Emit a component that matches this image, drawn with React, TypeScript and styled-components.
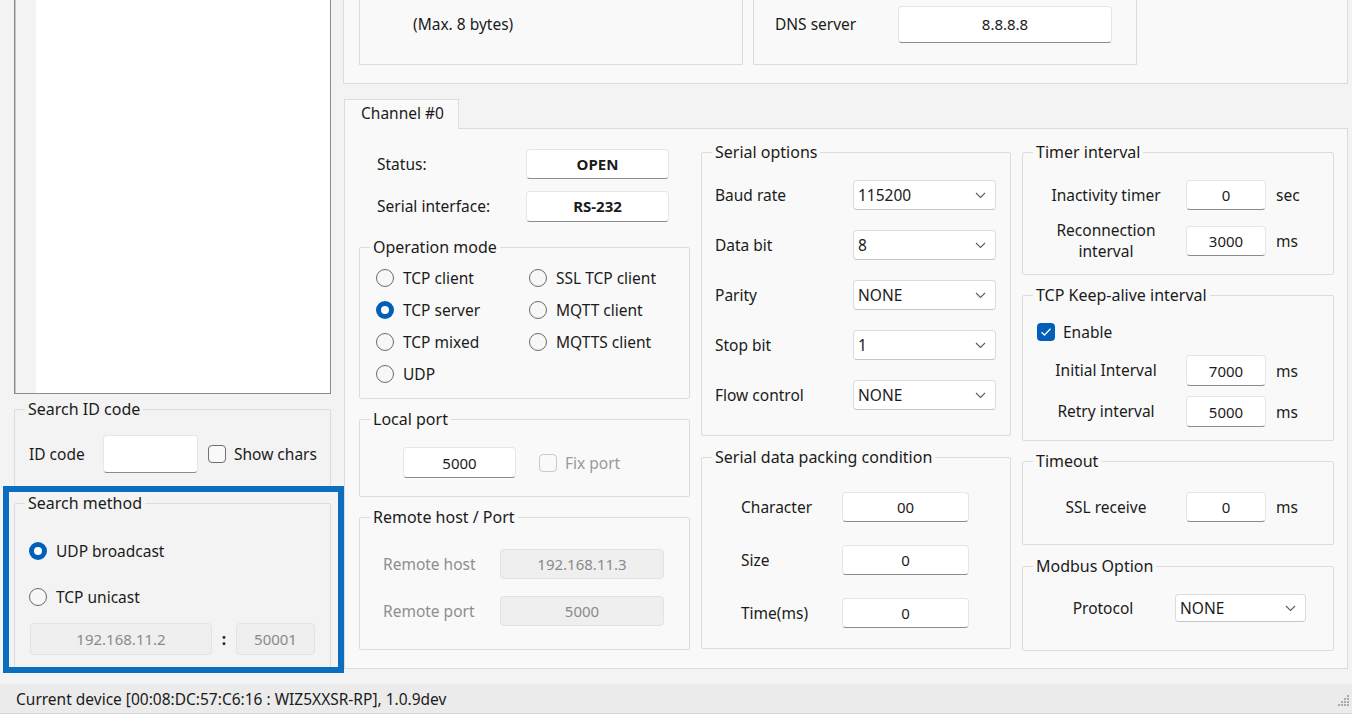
import React from "react";
import styled, { createGlobalStyle, css } from "styled-components";

const GlobalStyle = createGlobalStyle`
  html, body { margin: 0; padding: 0; }
  body {
    width: 1352px;
    height: 714px;
    overflow: hidden;
    background: #f3f3f3;
    font-family: "Noto Sans", "Open Sans", sans-serif;
    font-size: 15.5px;
    color: #1b1b1b;
  }
  * { box-sizing: border-box; }
`;

const Window = styled.div`
  width: 1352px;
  height: 714px;
  display: flex;
  flex-direction: column;
`;

const Main = styled.div`
  display: flex;
  height: 684px;
`;

/* ---------- left panel ---------- */
const LeftPanel = styled.div`
  position: relative;
  width: 343px;
  flex: none;
  padding: 0 12px 0 14px;
  display: flex;
  flex-direction: column;
`;

const ListBox = styled.div`
  height: 394px;
  border: 1px solid #8a8a8a;
  border-top: none;
  display: flex;
  box-shadow: inset 1px 0 0 #c4c4c4;
`;

const ListGutter = styled.div`
  width: 20px;
  background: #f3f3f3;
  margin-left: 1px;
`;

const ListBody = styled.div`
  flex: 1;
  background: #fff;
`;

const Highlight = styled.div`
  position: absolute;
  left: 3px;
  top: 486px;
  width: 341px;
  height: 187px;
  border: 6px solid #0b6dbe;
  pointer-events: none;
`;

/* ---------- generic controls ---------- */
const GroupBox = styled.fieldset<{ $h: number; $mt?: number }>`
  margin: ${(p) => p.$mt ?? 0}px 0 0 0;
  padding: 0;
  min-width: 0;
  border: 1px solid #dcdcdc;
  border-radius: 2px;
  height: ${(p) => p.$h}px;
  flex: none;
`;

const Legend = styled.legend`
  margin-left: 10px;
  padding: 0 3px;
  line-height: 20px;
  font-size: 16px;
`;

const Row = styled.div<{ $pl?: number; $mt?: number; $h?: number }>`
  display: flex;
  align-items: center;
  padding-left: ${(p) => p.$pl ?? 0}px;
  margin-top: ${(p) => p.$mt ?? 0}px;
  height: ${(p) => (p.$h ? `${p.$h}px` : "auto")};
`;

const Label = styled.span<{ $w?: number; $center?: boolean; $muted?: boolean }>`
  width: ${(p) => (p.$w ? `${p.$w}px` : "auto")};
  flex: none;
  text-align: ${(p) => (p.$center ? "center" : "left")};
  color: ${(p) => (p.$muted ? "#8e8e8e" : "inherit")};
  line-height: 19px;
  white-space: nowrap;
`;

const Unit = styled.span`
  margin-left: 10px;
`;

const Field = styled.div<{
  $w: number;
  $h: number;
  $bold?: boolean;
  $disabled?: boolean;
  $ml?: number;
}>`
  width: ${(p) => p.$w}px;
  height: ${(p) => p.$h}px;
  margin-left: ${(p) => p.$ml ?? 0}px;
  flex: none;
  display: flex;
  align-items: center;
  justify-content: center;
  border-radius: 4px;
  font-size: 15px;
  font-weight: ${(p) => (p.$bold ? 700 : 400)};
  ${(p) =>
    p.$disabled
      ? css`
          background: #efefef;
          border: 1px solid #e2e2e2;
          color: #8a8a8a;
        `
      : css`
          background: #fff;
          border: 1px solid #e6e6e6;
          border-bottom: 1px solid #8c8c8c;
        `}
`;

const ComboBox = styled.div<{ $w: number; $h: number }>`
  width: ${(p) => p.$w}px;
  height: ${(p) => p.$h}px;
  flex: none;
  display: flex;
  align-items: center;
  justify-content: space-between;
  padding: 0 9px 0 4px;
  background: #fff;
  border: 1px solid #dcdcdc;
  border-bottom-color: #c6c6c6;
  border-radius: 4px;
`;

const Chevron = () => (
  <svg width="11" height="7" viewBox="0 0 11 7">
    <path d="M1 1 L5.5 5.5 L10 1" fill="none" stroke="#5c5c5c" strokeWidth="1.1" />
  </svg>
);

const Combo = ({ w, h = 30, value }: { w: number; h?: number; value: string }) => (
  <ComboBox $w={w} $h={h}>
    <span>{value}</span>
    <Chevron />
  </ComboBox>
);

const RadioDot = styled.span<{ $on?: boolean }>`
  width: 18px;
  height: 18px;
  flex: none;
  border-radius: 50%;
  ${(p) =>
    p.$on
      ? css`
          background: #fff;
          box-shadow: inset 0 0 0 5px #005fb8;
        `
      : css`
          background: #f7f7f7;
          border: 1px solid #6b6b6b;
        `}
`;

const RadioItem = styled.label`
  display: flex;
  align-items: center;
  gap: 9px;
  white-space: nowrap;
`;

const Radio = ({ on, children }: { on?: boolean; children: React.ReactNode }) => (
  <RadioItem>
    <RadioDot $on={on} />
    {children}
  </RadioItem>
);

const CheckBox = styled.span<{ $on?: boolean; $disabled?: boolean }>`
  width: 18px;
  height: 18px;
  flex: none;
  border-radius: 4px;
  display: flex;
  align-items: center;
  justify-content: center;
  ${(p) =>
    p.$on
      ? css`
          background: #005fb8;
        `
      : css`
          background: #f9f9f9;
          border: 1px solid ${p.$disabled ? "#c9c9c9" : "#6f6f6f"};
        `}
`;

const CheckItem = styled.label<{ $ml?: number; $muted?: boolean }>`
  display: flex;
  align-items: center;
  gap: 8px;
  margin-left: ${(p) => p.$ml ?? 0}px;
  color: ${(p) => (p.$muted ? "#9a9a9a" : "inherit")};
  white-space: nowrap;
`;

const Check = ({
  on,
  disabled,
  ml,
  children,
}: {
  on?: boolean;
  disabled?: boolean;
  ml?: number;
  children: React.ReactNode;
}) => (
  <CheckItem $ml={ml} $muted={disabled}>
    <CheckBox $on={on} $disabled={disabled}>
      {on && (
        <svg width="12" height="10" viewBox="0 0 12 10">
          <path d="M1.5 5.2 L4.5 8 L10.5 1.8" fill="none" stroke="#fff" strokeWidth="1.3" />
        </svg>
      )}
    </CheckBox>
    {children}
  </CheckItem>
);

/* ---------- left panel parts ---------- */
const MethodBody = styled.div`
  padding: 28px 0 0 14px;
  display: flex;
  flex-direction: column;
`;

const Colon = styled.span`
  width: 24px;
  text-align: center;
  font-weight: 700;
`;

/* ---------- right area ---------- */
const RightArea = styled.div`
  flex: 1;
  display: flex;
  flex-direction: column;
  padding-right: 4px;
`;

const TopPanel = styled.div`
  height: 84px;
  border: 1px solid #dcdcdc;
  border-top: none;
  background: #f9f9f9;
  display: flex;
  gap: 10px;
  padding-left: 15px;
`;

const TopBox = styled.div`
  width: 384px;
  height: 65px;
  border: 1px solid #dcdcdc;
  border-top: none;
`;

const TabStrip = styled.div`
  display: flex;
  margin: 15px 0 0 1px;
`;

const Tab = styled.div`
  position: relative;
  z-index: 1;
  width: 115px;
  height: 30px;
  margin-bottom: -1px;
  padding: 0 0 3px 16px;
  display: flex;
  align-items: center;
  background: #f9f9f9;
  border: 1px solid #dcdcdc;
  border-bottom: none;
`;

const TabPane = styled.div`
  margin-left: 1px;
  height: 541px;
  border: 1px solid #dcdcdc;
  background: #f9f9f9;
  padding: 13px 13px 0 14px;
  display: flex;
  gap: 11px;
`;

const Column = styled.div<{ $w: number }>`
  width: ${(p) => p.$w}px;
  flex: none;
  display: flex;
  flex-direction: column;
`;

const RadioGrid = styled.div`
  display: grid;
  grid-template-columns: 153px auto;
  grid-auto-rows: 32px;
  align-items: center;
  padding: 5px 0 0 16px;
`;

const StackBody = styled.div<{ $pt: number; $gap: number; $pl?: number }>`
  display: flex;
  flex-direction: column;
  gap: ${(p) => p.$gap}px;
  padding-top: ${(p) => p.$pt}px;
  padding-left: ${(p) => p.$pl ?? 0}px;
`;

const FixedRow = styled(Row)`
  height: 30px;
`;

const TwoLine = styled.span`
  width: 150px;
  flex: none;
  margin: -6px 0;
  text-align: center;
  line-height: 21px;
`;

/* ---------- status bar ---------- */
const StatusBar = styled.div`
  height: 30px;
  background: #ebebeb;
  border-bottom: 1px solid #d6d6d6;
  display: flex;
  align-items: center;
  justify-content: space-between;
  padding: 0 2px 0 16px;
`;

const Grip = () => (
  <svg width="14" height="14" viewBox="0 0 14 14">
    {[
      [11, 3],
      [8, 6],
      [11, 6],
      [5, 9],
      [8, 9],
      [11, 9],
      [2, 12],
      [5, 12],
      [8, 12],
      [11, 12],
    ].map(([x, y]) => (
      <rect key={`${x}-${y}`} x={x} y={y} width="2" height="2" fill="#a9a9a9" />
    ))}
  </svg>
);

export default function App() {
  return (
    <>
      <GlobalStyle />
      <Window>
        <Main>
          <LeftPanel>
            <ListBox>
              <ListGutter />
              <ListBody />
            </ListBox>

            <GroupBox $h={88} $mt={5}>
              <Legend>Search ID code</Legend>
              <Row $pl={14} $mt={16}>
                <Label $w={74}>ID code</Label>
                <Field $w={95} $h={38} />
                <Check ml={10}>Show chars</Check>
              </Row>
            </GroupBox>

            <GroupBox $h={176} $mt={6}>
              <Legend>Search method</Legend>
              <MethodBody>
                <Row $h={20}>
                  <Radio on>UDP broadcast</Radio>
                </Row>
                <Row $h={20} $mt={26}>
                  <Radio>TCP unicast</Radio>
                </Row>
                <Row $mt={16}>
                  <Field $w={182} $h={32} $ml={1} $disabled>
                    192.168.11.2
                  </Field>
                  <Colon>:</Colon>
                  <Field $w={79} $h={32} $disabled>
                    50001
                  </Field>
                </Row>
              </MethodBody>
            </GroupBox>

            <Highlight />
          </LeftPanel>

          <RightArea>
            <TopPanel>
              <TopBox>
                <Row $h={48} $pl={53}>
                  <Label>(Max. 8 bytes)</Label>
                </Row>
              </TopBox>
              <TopBox>
                <Row $h={48} $pl={21}>
                  <Label $w={123}>DNS server</Label>
                  <Field $w={214} $h={37}>
                    8.8.8.8
                  </Field>
                </Row>
              </TopBox>
            </TopPanel>

            <TabStrip>
              <Tab>Channel #0</Tab>
            </TabStrip>

            <TabPane>
              {/* column 1 */}
              <Column $w={331}>
                <Row $pl={18} $mt={7} $h={30}>
                  <Label $w={149}>Status:</Label>
                  <Field $w={143} $h={30} $bold>
                    OPEN
                  </Field>
                </Row>
                <Row $pl={18} $mt={12} $h={30}>
                  <Label $w={149}>Serial interface:</Label>
                  <Field $w={143} $h={31} $bold>
                    RS-232
                  </Field>
                </Row>

                <GroupBox $h={162} $mt={16}>
                  <Legend>Operation mode</Legend>
                  <RadioGrid>
                    <Radio>TCP client</Radio>
                    <Radio>SSL TCP client</Radio>
                    <Radio on>TCP server</Radio>
                    <Radio>MQTT client</Radio>
                    <Radio>TCP mixed</Radio>
                    <Radio>MQTTS client</Radio>
                    <Radio>UDP</Radio>
                  </RadioGrid>
                </GroupBox>

                <GroupBox $h={88} $mt={10}>
                  <Legend>Local port</Legend>
                  <Row $pl={43} $mt={18}>
                    <Field $w={113} $h={31}>
                      5000
                    </Field>
                    <Check ml={23} disabled>
                      Fix port
                    </Check>
                  </Row>
                </GroupBox>

                <GroupBox $h={143} $mt={10}>
                  <Legend>Remote host / Port</Legend>
                  <StackBody $pt={22} $gap={17} $pl={23}>
                    <Row>
                      <Label $w={117} $muted>
                        Remote host
                      </Label>
                      <Field $w={164} $h={30} $disabled>
                        192.168.11.3
                      </Field>
                    </Row>
                    <Row>
                      <Label $w={117} $muted>
                        Remote port
                      </Label>
                      <Field $w={164} $h={30} $disabled>
                        5000
                      </Field>
                    </Row>
                  </StackBody>
                </GroupBox>
              </Column>

              {/* column 2 */}
              <Column $w={310}>
                <GroupBox $h={294}>
                  <Legend>Serial options</Legend>
                  <StackBody $pt={18} $gap={20} $pl={13}>
                    {[
                      ["Baud rate", "115200"],
                      ["Data bit", "8"],
                      ["Parity", "NONE"],
                      ["Stop bit", "1"],
                      ["Flow control", "NONE"],
                    ].map(([l, v]) => (
                      <Row key={l}>
                        <Label $w={138}>{l}</Label>
                        <Combo w={143} value={v} />
                      </Row>
                    ))}
                  </StackBody>
                </GroupBox>

                <GroupBox $h={202} $mt={11}>
                  <Legend>Serial data packing condition</Legend>
                  <StackBody $pt={25} $gap={23} $pl={39}>
                    {[
                      ["Character", "00"],
                      ["Size", "0"],
                      ["Time(ms)", "0"],
                    ].map(([l, v]) => (
                      <Row key={l}>
                        <Label $w={101}>{l}</Label>
                        <Field $w={127} $h={30}>
                          {v}
                        </Field>
                      </Row>
                    ))}
                  </StackBody>
                </GroupBox>
              </Column>

              {/* column 3 */}
              <Column $w={312}>
                <GroupBox $h={133}>
                  <Legend>Timer interval</Legend>
                  <StackBody $pt={18} $gap={16} $pl={8}>
                    <Row>
                      <Label $w={150} $center>
                        Inactivity timer
                      </Label>
                      <Field $w={80} $h={30} $ml={5}>
                        0
                      </Field>
                      <Unit>sec</Unit>
                    </Row>
                    <FixedRow>
                      <TwoLine>
                        Reconnection
                        <br />
                        interval
                      </TwoLine>
                      <Field $w={80} $h={30} $ml={5}>
                        3000
                      </Field>
                      <Unit>ms</Unit>
                    </FixedRow>
                  </StackBody>
                </GroupBox>

                <GroupBox $h={156} $mt={10}>
                  <Legend>TCP Keep-alive interval</Legend>
                  <Row $pl={14} $mt={17} $h={20}>
                    <Check on>Enable</Check>
                  </Row>
                  <StackBody $pt={13} $gap={10} $pl={8}>
                    <Row>
                      <Label $w={150} $center>
                        Initial Interval
                      </Label>
                      <Field $w={80} $h={31} $ml={5}>
                        7000
                      </Field>
                      <Unit>ms</Unit>
                    </Row>
                    <Row>
                      <Label $w={150} $center>
                        Retry interval
                      </Label>
                      <Field $w={80} $h={31} $ml={5}>
                        5000
                      </Field>
                      <Unit>ms</Unit>
                    </Row>
                  </StackBody>
                </GroupBox>

                <GroupBox $h={94} $mt={10}>
                  <Legend>Timeout</Legend>
                  <Row $pl={8} $mt={21}>
                    <Label $w={150} $center>
                      SSL receive
                    </Label>
                    <Field $w={80} $h={30} $ml={5}>
                      0
                    </Field>
                    <Unit>ms</Unit>
                  </Row>
                </GroupBox>

                <GroupBox $h={95} $mt={11}>
                  <Legend>Modbus Option</Legend>
                  <Row $pl={8} $mt={18}>
                    <Label $w={144} $center>
                      Protocol
                    </Label>
                    <Combo w={131} h={28} value="NONE" />
                  </Row>
                </GroupBox>
              </Column>
            </TabPane>
          </RightArea>
        </Main>

        <StatusBar>
          <span>Current device [00:08:DC:57:C6:16 : WIZ5XXSR-RP], 1.0.9dev</span>
          <Grip />
        </StatusBar>
      </Window>
    </>
  );
}
